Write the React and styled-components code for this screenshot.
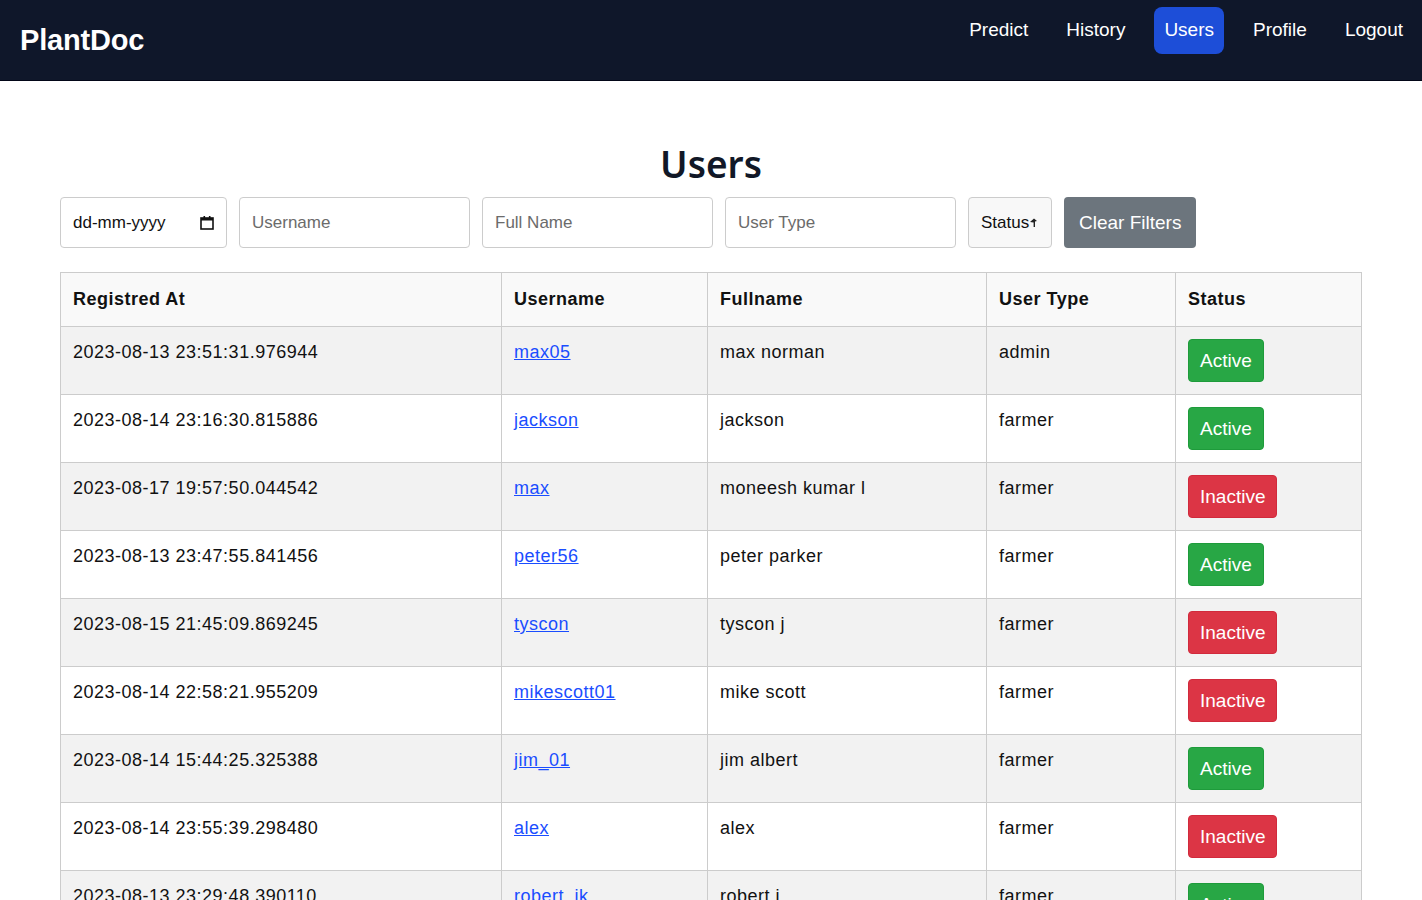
import styled, { createGlobalStyle } from 'styled-components'

const GlobalStyle = createGlobalStyle`
  body {
    margin: 0;
    font-family: "Liberation Sans", Arial, sans-serif;
    background: #ffffff;
    color: #111;
  }
`

const NavBar = styled.nav`
  height: 80px;
  background: #0f172a;
  border-bottom: 1px solid #020617;
  display: flex;
  justify-content: space-between;
  padding: 0 0 0 20px;
`

const Brand = styled.div`
  color: #fff;
  font-size: 29px;
  font-weight: 700;
  letter-spacing: -0.2px;
  line-height: 80px;
`

const NavLinks = styled.div`
  display: flex;
  align-items: flex-start;
  gap: 10px;
  padding: 7px 5px 0 0;
`

const NavLink = styled.a`
  color: #fff;
  font-size: 19px;
  padding: 0 ${props => (props.active ? '10px' : '14px')};
  height: 47px;
  line-height: 46px;
  border-radius: 8px;
  background: ${props => (props.active ? '#1d4ed8' : 'transparent')};
  margin: 0 ${props => (props.active ? '5px' : '0')};
`

const Main = styled.main`
  padding: 0 60px;
`

const Title = styled.h1`
  margin: 60px 0 10px;
  text-align: center;
  font-family: "Noto Sans", "Open Sans", sans-serif;
  font-size: 37px;
  font-weight: 600;
  line-height: 46px;
  color: #111827;
`

const Filters = styled.div`
  display: flex;
  gap: 12px;
  margin-bottom: 24px;
`

const Field = styled.div`
  box-sizing: border-box;
  width: ${props => props.width}px;
  height: 51px;
  border: 1px solid #cccccc;
  border-radius: 4px;
  padding: 0 12px;
  display: flex;
  align-items: center;
  justify-content: ${props => (props.compact ? 'flex-start' : 'space-between')};
  font-size: 17px;
  color: ${props => (props.muted ? '#6b6b6b' : '#111')};
  background: ${props => (props.compact ? '#f8f8f8' : '#fff')};
`

const ClearButton = styled.button`
  height: 51px;
  padding: 0 15px;
  border: none;
  border-radius: 4px;
  background: #6c757d;
  color: #fff;
  font-family: inherit;
  font-size: 19px;
`

const Table = styled.table`
  width: 100%;
  border-collapse: collapse;
  font-size: 18px;
  letter-spacing: 0.5px;
`

const Th = styled.th`
  text-align: left;
  font-weight: 700;
  padding: 13px 12px;
  height: 27px;
  border: 1px solid #cccccc;
  background: #f9f9f9;
  width: ${props => props.width}px;
`

const Row = styled.tr`
  background: ${props => (props.odd ? '#f2f2f2' : '#ffffff')};
`

const Td = styled.td`
  vertical-align: top;
  padding: 12px 12px;
  line-height: 27px;
  border: 1px solid #cccccc;
  color: #111;
`

const UserLink = styled.a`
  color: #1a4dff;
  text-decoration: underline;
`

const StatusButton = styled.button`
  height: 43px;
  padding: 0 11px;
  border: 1px solid ${props => (props.active ? '#1e9b3b' : '#d12a3c')};
  border-radius: 4px;
  background: ${props => (props.active ? '#28a745' : '#dc3545')};
  color: #fff;
  font-family: inherit;
  font-size: 19px;
`

const users = [
  ['2023-08-13 23:51:31.976944', 'max05', 'max norman', 'admin', true],
  ['2023-08-14 23:16:30.815886', 'jackson', 'jackson', 'farmer', true],
  ['2023-08-17 19:57:50.044542', 'max', 'moneesh kumar l', 'farmer', false],
  ['2023-08-13 23:47:55.841456', 'peter56', 'peter parker', 'farmer', true],
  ['2023-08-15 21:45:09.869245', 'tyscon', 'tyscon j', 'farmer', false],
  ['2023-08-14 22:58:21.955209', 'mikescott01', 'mike scott', 'farmer', false],
  ['2023-08-14 15:44:25.325388', 'jim_01', 'jim albert', 'farmer', true],
  ['2023-08-14 23:55:39.298480', 'alex', 'alex', 'farmer', false],
  ['2023-08-13 23:29:48.390110', 'robert_jk', 'robert j', 'farmer', true],
]

const CalendarIcon = () => (
  <svg width="14" height="15" viewBox="0 0 14 15">
    <rect x="1" y="3" width="12" height="11" fill="none" stroke="#111" strokeWidth="1.6" />
    <rect x="1" y="3" width="12" height="2.5" fill="#111" />
    <rect x="3.5" y="1" width="1.6" height="3" fill="#111" />
    <rect x="8.9" y="1" width="1.6" height="3" fill="#111" />
  </svg>
)

const SelectArrow = () => (
  <svg width="9" height="10" viewBox="0 0 9 10">
    <path d="M1 4 L5 0.5 L8 3 L6 3.5 L6 9 L4.6 9 L4.6 4.5 Z" fill="#222" />
  </svg>
)

export default function App() {
  return (
    <>
      <GlobalStyle />
      <NavBar>
        <Brand>PlantDoc</Brand>
        <NavLinks>
          <NavLink>Predict</NavLink>
          <NavLink>History</NavLink>
          <NavLink active>Users</NavLink>
          <NavLink>Profile</NavLink>
          <NavLink>Logout</NavLink>
        </NavLinks>
      </NavBar>
      <Main>
        <Title>Users</Title>
        <Filters>
          <Field width={167}>
            dd-mm-yyyy
            <CalendarIcon />
          </Field>
          <Field width={231} muted>Username</Field>
          <Field width={231} muted>Full Name</Field>
          <Field width={231} muted>User Type</Field>
          <Field width={84} compact>
            Status
            <SelectArrow />
          </Field>
          <ClearButton>Clear Filters</ClearButton>
        </Filters>
        <Table>
          <thead>
            <tr>
              <Th width={416}>Registred At</Th>
              <Th width={181}>Username</Th>
              <Th width={254}>Fullname</Th>
              <Th width={164}>User Type</Th>
              <Th>Status</Th>
            </tr>
          </thead>
          <tbody>
            {users.map(([date, username, fullname, type, active], index) => (
              <Row key={username} odd={index % 2 === 0}>
                <Td>{date}</Td>
                <Td>
                  <UserLink href="#">{username}</UserLink>
                </Td>
                <Td>{fullname}</Td>
                <Td>{type}</Td>
                <Td>
                  <StatusButton active={active}>{active ? 'Active' : 'Inactive'}</StatusButton>
                </Td>
              </Row>
            ))}
          </tbody>
        </Table>
      </Main>
    </>
  )
}
